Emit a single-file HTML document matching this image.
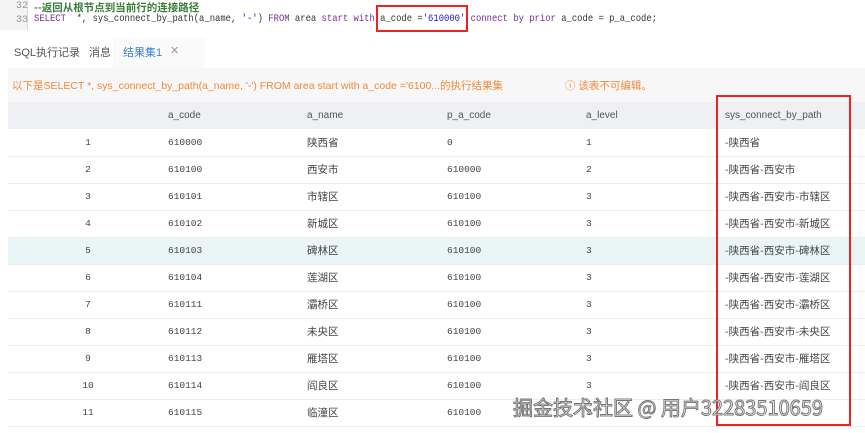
<!DOCTYPE html>
<html><head><meta charset="utf-8"><style>
*{margin:0;padding:0;box-sizing:border-box}
body{width:865px;height:433px;overflow:hidden;background:#fff;font-family:"Liberation Sans","Noto Sans CJK SC",sans-serif;position:relative}
.code{position:absolute;left:0;top:0;width:865px;height:30px;font-family:"Liberation Mono","Noto Sans CJK SC",monospace;font-size:10.5px}
.ln{position:absolute;left:0;top:0;width:28px;height:30px;background:#f3f3f3;border-right:1px solid #ddd;color:#999;font-size:10px}
.l{position:absolute;left:34px;white-space:pre;color:#333}
.kw{color:#7a2d8f}.s{color:#1a1acc}.c{color:#3a7d3a;font-weight:bold}
.tabs{position:absolute;top:38px;left:0;width:865px;height:30px;font-size:11px;color:#555}
.tab{position:absolute;top:6px}
.sel{position:absolute;left:113px;top:0;width:92px;height:30px;background:#fafafa}
.msg{position:absolute;top:68px;left:8px;width:857px;height:34px;background:#f7f7f7;color:#f08a3c;font-size:10.5px}
table{position:absolute;top:102px;left:8px;width:857px;border-collapse:collapse;font-size:10px;color:#444}
th{height:27px;background:#eef0f3;font-weight:normal;text-align:left;color:#555}
td{height:27px;border-bottom:1px solid #eee;font-family:"Liberation Mono","Noto Sans CJK SC",monospace;font-size:9.5px}
td.z,th.z{font-family:"Noto Sans CJK SC",sans-serif;font-size:10.5px}
td:first-child{text-align:center}
th,td{padding-left:14px}
tr.h td{background:#eaf5f5}
.box{position:absolute;border:2px solid #e22}
.wm{position:absolute;left:513px;top:392px;font-size:20px;color:#fff;-webkit-text-stroke:1px #777;font-family:"Noto Sans CJK SC",sans-serif;white-space:nowrap}
</style></head><body>
<div class="code">
<div class="ln"><div style="position:absolute;top:1px;left:16px">32</div><div style="position:absolute;top:15px;left:16px">33</div></div>
<div class="l c" style="top:0px;font-family:'Noto Sans CJK SC',sans-serif;font-size:10.5px">--返回从根节点到当前行的连接路径</div>
<div class="l" style="top:13px;transform:scaleX(0.845);transform-origin:0 0"><span class="kw">SELECT</span>  *, sys_connect_by_path(a_name, <span class="s">'-'</span>) <span class="kw">FROM</span> area <span class="kw">start with</span> a_code =<span class="s">'610000'</span> <span class="kw">connect by prior</span> a_code = p_a_code;</div>
</div>
<div class="box" style="left:376px;top:5px;width:92px;height:27px"></div>
<div class="tabs"><div class="sel"></div>
<div class="tab" style="left:14px">SQL执行记录</div><div class="tab" style="left:89px">消息</div>
<div class="tab" style="left:123px;color:#3b7fd9">结果集1</div><div class="tab" style="left:170px;color:#999">✕</div></div>
<div class="msg"><div style="position:absolute;left:4px;top:10px">以下是SELECT *, sys_connect_by_path(a_name, '-') FROM area start with a_code ='6100...的执行结果集</div>
<div style="position:absolute;left:557px;top:10px">ⓘ 该表不可编辑。</div></div>
<table>
<tr><th style="width:146px"></th><th style="width:139px">a_code</th><th style="width:140px">a_name</th><th style="width:139px">p_a_code</th><th style="width:139px">a_level</th><th>sys_connect_by_path</th></tr>
<tr><td>1</td><td>610000</td><td class="z">陕西省</td><td>0</td><td>1</td><td class="z">-陕西省</td></tr>
<tr><td>2</td><td>610100</td><td class="z">西安市</td><td>610000</td><td>2</td><td class="z">-陕西省-西安市</td></tr>
<tr><td>3</td><td>610101</td><td class="z">市辖区</td><td>610100</td><td>3</td><td class="z">-陕西省-西安市-市辖区</td></tr>
<tr><td>4</td><td>610102</td><td class="z">新城区</td><td>610100</td><td>3</td><td class="z">-陕西省-西安市-新城区</td></tr>
<tr class="h"><td>5</td><td>610103</td><td class="z">碑林区</td><td>610100</td><td>3</td><td class="z">-陕西省-西安市-碑林区</td></tr>
<tr><td>6</td><td>610104</td><td class="z">莲湖区</td><td>610100</td><td>3</td><td class="z">-陕西省-西安市-莲湖区</td></tr>
<tr><td>7</td><td>610111</td><td class="z">灞桥区</td><td>610100</td><td>3</td><td class="z">-陕西省-西安市-灞桥区</td></tr>
<tr><td>8</td><td>610112</td><td class="z">未央区</td><td>610100</td><td>3</td><td class="z">-陕西省-西安市-未央区</td></tr>
<tr><td>9</td><td>610113</td><td class="z">雁塔区</td><td>610100</td><td>3</td><td class="z">-陕西省-西安市-雁塔区</td></tr>
<tr><td>10</td><td>610114</td><td class="z">阎良区</td><td>610100</td><td>3</td><td class="z">-陕西省-西安市-阎良区</td></tr>
<tr><td>11</td><td>610115</td><td class="z">临潼区</td><td>610100</td><td>3</td><td class="z"></td></tr>
</table>
<div class="box" style="left:716px;top:95px;width:135px;height:331px"></div>
<div class="wm">掘金技术社区 @ 用户32283510659</div>
</body></html>
